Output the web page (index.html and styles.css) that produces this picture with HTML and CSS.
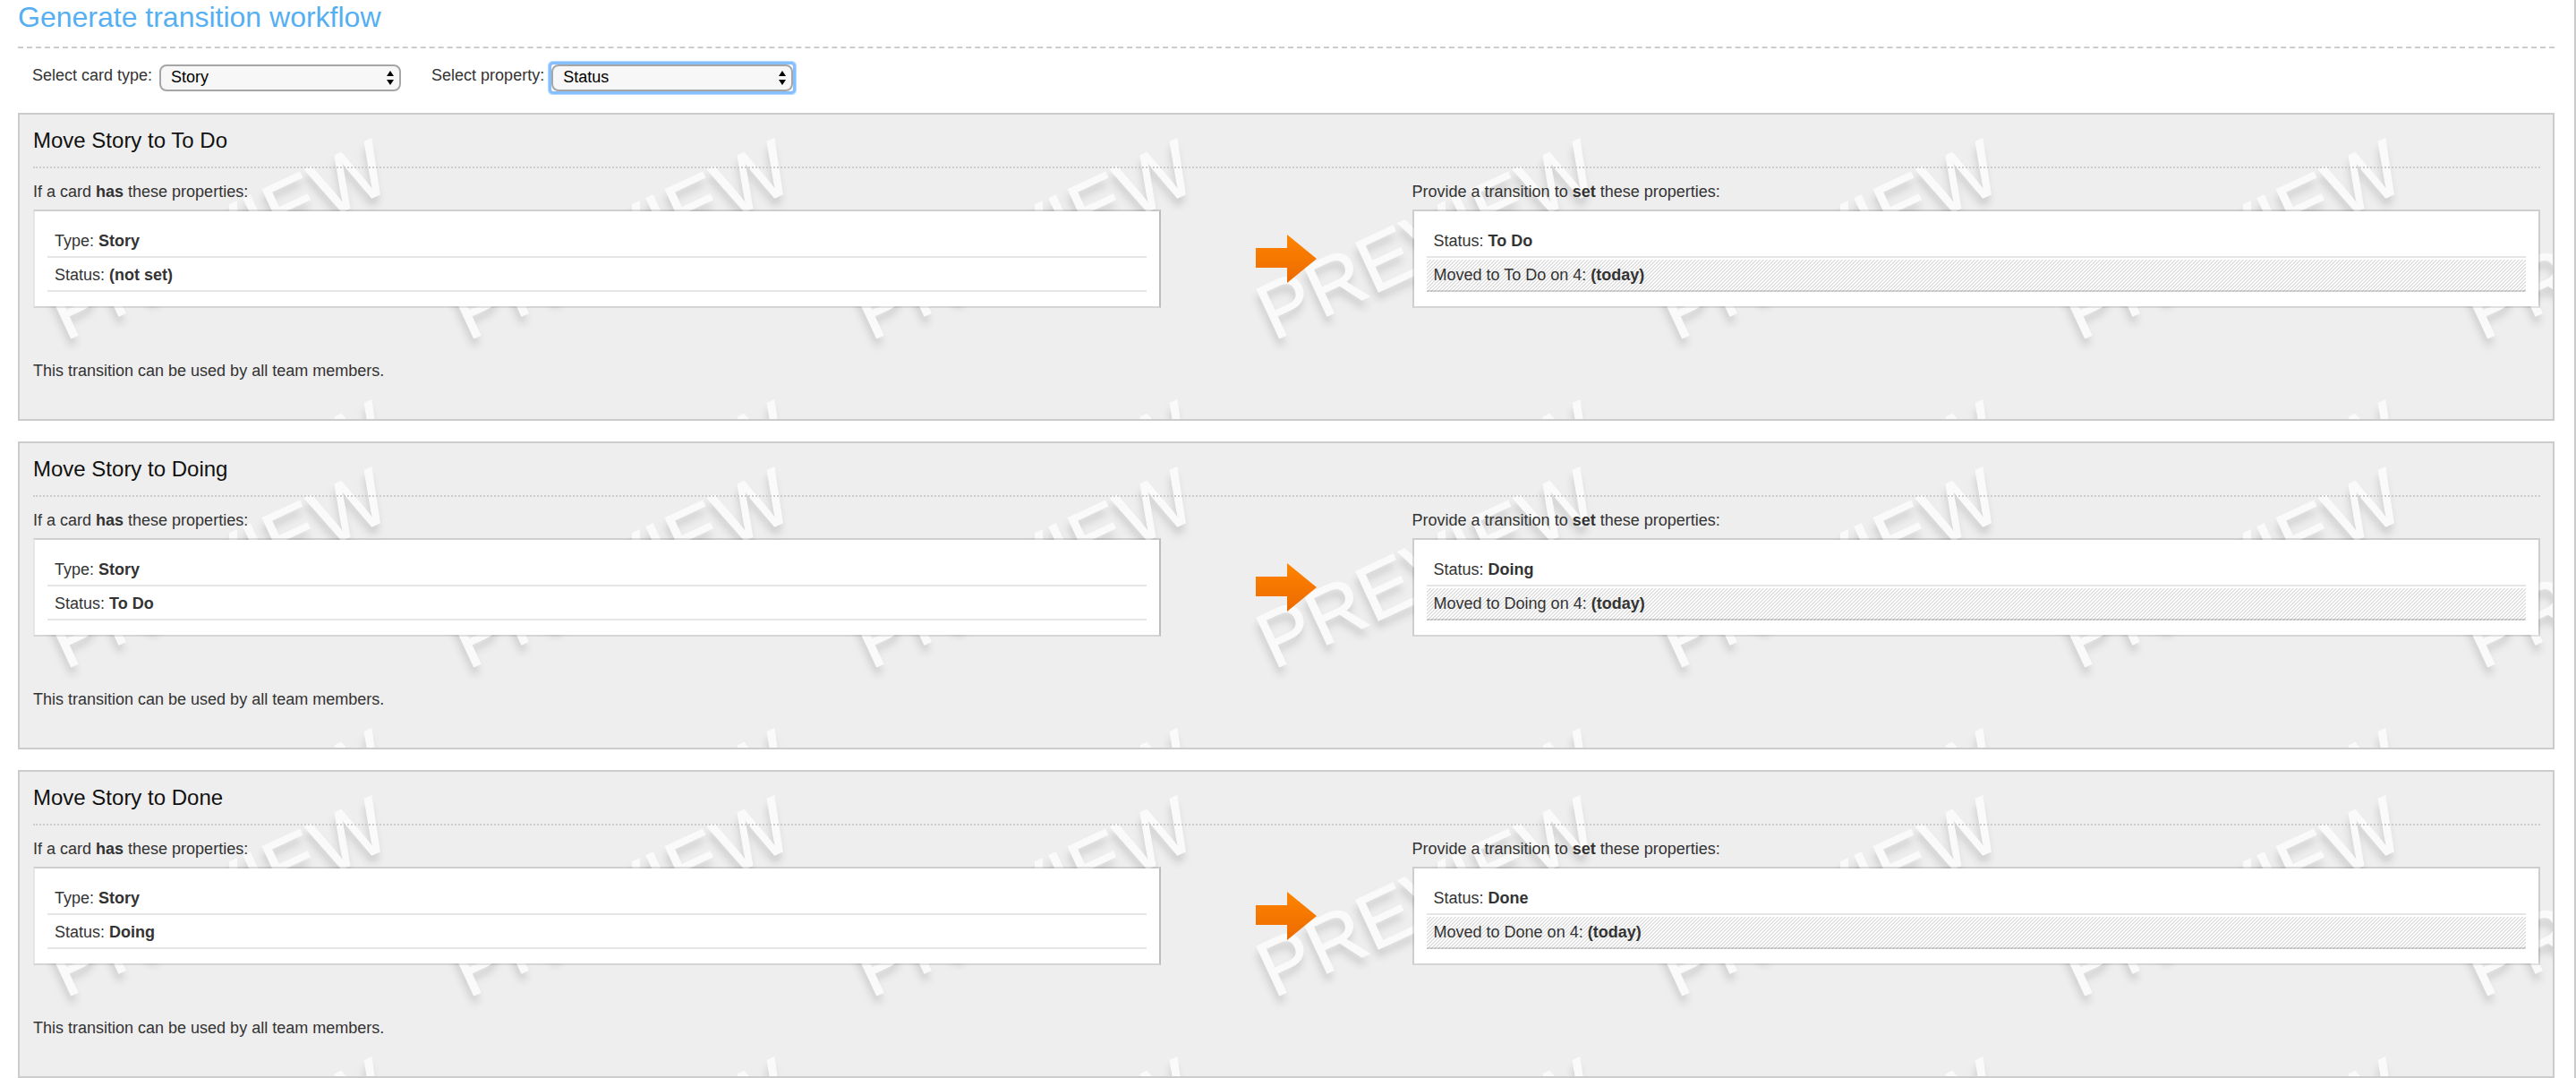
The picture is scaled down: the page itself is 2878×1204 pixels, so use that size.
FILE: index.html
```html
<!DOCTYPE html>
<html lang="en">
<head>
<meta charset="utf-8">
<title>Generate transition workflow</title>
<link rel="stylesheet" href="styles.css">
</head>
<body>
<svg class="defs" aria-hidden="true">
  <defs>
    <filter id="soft" x="-10%" y="-40%" width="120%" height="180%"><feGaussianBlur stdDeviation="4"/></filter>
    <pattern id="preview" width="450" height="292" patternUnits="userSpaceOnUse">
      <g filter="url(#soft)"><text class="mark-shadow" transform="translate(50 262) rotate(-25)">PREVIEW</text></g>
      <text class="mark" transform="translate(51 253) rotate(-25)">PREVIEW</text>
    </pattern>
    <linearGradient id="orange" x1="0" y1="0" x2="0" y2="1">
      <stop offset="0" stop-color="#ff8400"/><stop offset="1" stop-color="#eb6a00"/>
    </linearGradient>
    <symbol id="arrow" viewBox="0 0 68 54"><path d="M0 15h35V0l33 27-33 27V37H0z" fill="url(#orange)"/></symbol>
    <symbol id="updown" viewBox="0 0 8 16"><path d="M4 0l4 6H0zM0 10h8l-4 6z"/></symbol>
  </defs>
</svg>
<main class="page">
  <h1 class="page-title">Generate transition workflow</h1>
  <form class="filters">
    <div class="field">
      <label for="card-type">Select card type:</label>
      <div class="select">
        <select id="card-type"><option>Story</option></select>
        <svg class="select-icon"><use href="#updown"/></svg>
      </div>
    </div>
    <div class="field">
      <label for="property">Select property:</label>
      <div class="select select-active">
        <select id="property"><option>Status</option></select>
        <svg class="select-icon"><use href="#updown"/></svg>
      </div>
    </div>
  </form>
  <div class="transitions">
    <section class="transition">
      <svg class="watermark" aria-hidden="true"><rect width="100%" height="100%" fill="url(#preview)"/></svg>
      <h2>Move Story to To Do</h2>
      <div class="flow">
        <p class="from-label">If a card <b>has</b> these properties:</p>
        <p class="to-label">Provide a transition to <b>set</b> these properties:</p>
        <ul class="props from"><li>Type: <b>Story</b></li><li>Status: <b>(not set)</b></li></ul>
        <svg class="arrow"><use href="#arrow"/></svg>
        <ul class="props"><li>Status: <b>To Do</b></li><li class="hatched">Moved to To Do on 4: <b>(today)</b></li></ul>
      </div>
      <p class="note">This transition can be used by all team members.</p>
    </section>
    <section class="transition">
      <svg class="watermark" aria-hidden="true"><rect width="100%" height="100%" fill="url(#preview)"/></svg>
      <h2>Move Story to Doing</h2>
      <div class="flow">
        <p class="from-label">If a card <b>has</b> these properties:</p>
        <p class="to-label">Provide a transition to <b>set</b> these properties:</p>
        <ul class="props from"><li>Type: <b>Story</b></li><li>Status: <b>To Do</b></li></ul>
        <svg class="arrow"><use href="#arrow"/></svg>
        <ul class="props"><li>Status: <b>Doing</b></li><li class="hatched">Moved to Doing on 4: <b>(today)</b></li></ul>
      </div>
      <p class="note">This transition can be used by all team members.</p>
    </section>
    <section class="transition">
      <svg class="watermark" aria-hidden="true"><rect width="100%" height="100%" fill="url(#preview)"/></svg>
      <h2>Move Story to Done</h2>
      <div class="flow">
        <p class="from-label">If a card <b>has</b> these properties:</p>
        <p class="to-label">Provide a transition to <b>set</b> these properties:</p>
        <ul class="props from"><li>Type: <b>Story</b></li><li>Status: <b>Doing</b></li></ul>
        <svg class="arrow"><use href="#arrow"/></svg>
        <ul class="props"><li>Status: <b>Done</b></li><li class="hatched">Moved to Done on 4: <b>(today)</b></li></ul>
      </div>
      <p class="note">This transition can be used by all team members.</p>
    </section>
  </div>
</main>
</body>
</html>
```
FILE: styles.css
```css
* { box-sizing: border-box; }

body {
  margin: 0;
  background: #fff;
  color: #333;
  font: 18px/20px "Liberation Sans", Arial, sans-serif;
}

h1, h2, p, ul { margin: 0; padding: 0; font-weight: 400; }
ul { list-style: none; }

.defs { position: absolute; width: 0; height: 0; }

.page {
  min-height: 100vh;
  padding: 0 22px 0 20px;
  border-right: 2px solid #ccc;
}

.page-title {
  padding-bottom: 14px;
  border-bottom: 2px dashed #ccc;
  color: #55aff2;
  font-size: 32px;
  line-height: 38px;
}

.filters { display: flex; gap: 34px; padding: 18px 16px 24px; }
.field { display: flex; gap: 8px; }
.field label { line-height: 24px; }

.select { position: relative; width: 270px; height: 30px; border-radius: 2px; }
.select-active { box-shadow: 0 0 0 3px #85bfff, 0 0 0 4px #b5d8ff; }
.select select {
  appearance: none;
  display: block;
  width: 100%;
  height: 100%;
  padding: 0 30px 2px 11px;
  border: 2px solid #a6a6a6;
  border-radius: 8px;
  outline: none;
  background: #f7f7f7;
  color: #000;
  font: inherit;
}
.select-icon {
  position: absolute;
  top: 7px;
  right: 8px;
  width: 8px;
  height: 16px;
  pointer-events: none;
}

.transitions { display: grid; gap: 23px; }

.transition {
  position: relative;
  isolation: isolate;
  padding: 15px 14px 44px 15px;
  border: 2px solid #ccc;
  background: #eee;
}
.watermark {
  position: absolute;
  inset: 0;
  z-index: -1;
  width: 100%;
  height: 100%;
}
.mark, .mark-shadow { font-size: 88px; }
.mark { fill: #fafafa; stroke: #fafafa; stroke-width: 1px; }
.mark-shadow { fill: #000; fill-opacity: 0.14; }

.transition h2 {
  padding-bottom: 15px;
  border-bottom: 2px dotted #ccc;
  color: #111;
  font-size: 24px;
  line-height: 28px;
}

.flow {
  display: grid;
  grid-template-columns: 9fr 2fr 9fr;
  row-gap: 10px;
  align-items: center;
  padding-top: 16px;
}
.to-label { grid-column: 3; }

.props {
  display: grid;
  gap: 2px;
  padding: 16px 14px;
  border: 2px solid rgba(0, 0, 0, 0.13);
  border-bottom-color: rgba(0, 0, 0, 0.1);
  background: #fff padding-box;
}
.props.from {
  border-left-color: rgba(0, 0, 0, 0.04);
  border-right-color: rgba(0, 0, 0, 0.2);
}
.props li {
  padding: 7px 8px;
  border-bottom: 2px solid #e5e5e5;
}
.props .hatched {
  border-bottom-color: rgba(0, 0, 0, 0.15);
  background: linear-gradient(135deg, #e0e0e0 12%, #fff 25% 37%, #e0e0e0 50% 62%, #fff 75% 87%, #e0e0e0) 0 0 / 4px 4px;
}
.arrow { justify-self: center; width: 68px; height: 54px; }

.note { padding-top: 60px; }
```
